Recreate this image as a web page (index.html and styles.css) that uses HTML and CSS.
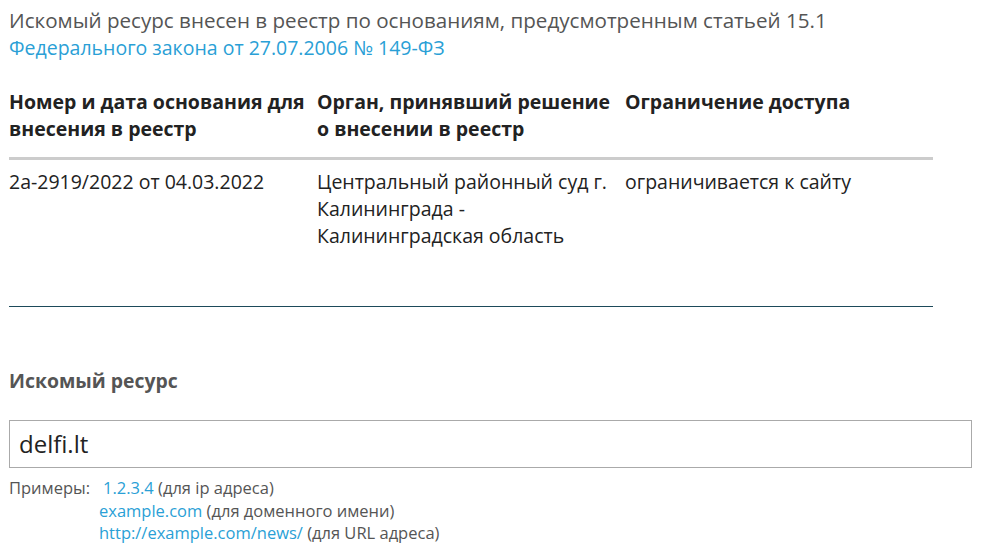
FILE: index.html
```html
<!DOCTYPE html>
<html lang="ru">
<head>
<meta charset="utf-8">
<link rel="stylesheet" href="styles.css">
</head>
<body>
<div class="page">
  <p class="intro">Искомый ресурс внесен в реестр по основаниям, предусмотренным статьей 15.1 <a class="link law" href="#">Федерального закона от 27.07.2006 № 149-ФЗ</a></p>
  <table class="reg">
    <thead>
      <tr>
        <th>Номер и дата основания для внесения в реестр</th>
        <th>Орган, принявший решение о внесении в реестр</th>
        <th>Ограничение доступа</th>
      </tr>
    </thead>
    <tbody>
      <tr>
        <td>2а-2919/2022 от 04.03.2022</td>
        <td>Центральный районный суд г. Калининграда - Калининградская область</td>
        <td>ограничивается к сайту</td>
      </tr>
    </tbody>
  </table>
  <div class="sep"></div>
  <h3 class="label">Искомый ресурс</h3>
  <div class="field">delfi.lt</div>
  <div class="examples">
    <span class="ex-title">Примеры:</span>
    <div class="ex-list">
      <div class="ex first"><a class="link" href="#">1.2.3.4</a> (для ip адреса)</div>
      <div class="ex"><a class="link" href="#">example.com</a> (для доменного имени)</div>
      <div class="ex"><a class="link" href="#">http://example.com/news/</a> (для URL адреса)</div>
    </div>
  </div>
</div>
</body>
</html>
```

FILE: styles.css
```css
html, body {
  margin: 0;
  padding: 0;
  background: #fff;
}
body {
  font-family: "Open Sans", "Noto Sans", sans-serif;
  color: #555;
}
.page {
  padding: 7px 0 0 9px;
  width: 963px;
}
.intro {
  margin: 0;
  font-size: 20.6px;
  line-height: 27px;
  width: 924px;
}
.link {
  color: #2a9fd6;
  text-decoration: none;
}
.law {
  font-size: 19.5px;
}
.reg {
  margin-top: 27px;
  width: 924px;
  border-collapse: collapse;
  table-layout: fixed;
  font-size: 19.5px;
  line-height: 27px;
  color: #222;
}
.reg th {
  width: 308px;
  text-align: left;
  vertical-align: top;
  font-weight: 700;
  padding: 0 0 15px 0;
  border-bottom: 3px solid #ccc;
}
.reg td {
  vertical-align: top;
  padding: 8px 0 0 0;
  font-weight: 400;
}
.sep {
  margin-top: 57px;
  width: 924px;
  border-top: 1px solid #1d4a5a;
}
.label {
  margin: 60px 0 0 0;
  font-size: 19.4px;
  line-height: 27px;
  font-weight: 700;
  color: #555;
}
.field {
  margin-top: 26px;
  box-sizing: border-box;
  width: 963px;
  height: 48px;
  border: 1px solid #aaa;
  padding: 0 0 0 9px;
  font-size: 24px;
  line-height: 46px;
  color: #222;
}
.examples {
  display: flex;
  margin-top: 9px;
  font-size: 16.5px;
  line-height: 22.5px;
  color: #555;
}
.ex-title {
  width: 90px;
  flex: none;
}
.ex.first {
  margin-left: 4px;
}
```
